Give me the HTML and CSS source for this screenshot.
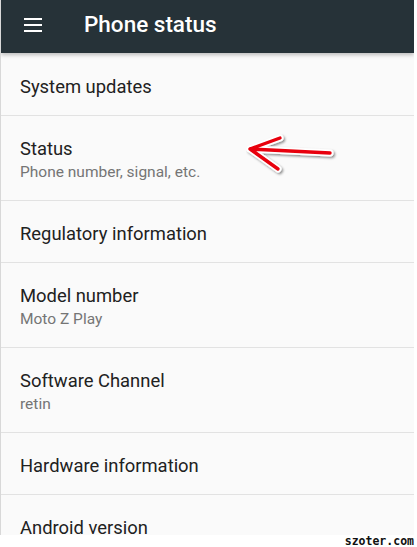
FILE: index.html
```html
<!DOCTYPE html>
<html lang="en">

<head>
    <meta charset="UTF-8">
    <meta name="viewport" content="width=device-width, initial-scale=1.0">
    <title>Phone status</title>
    <link rel="stylesheet" href="styles.css">
</head>

<body>
    <div class="screen">
        <div class="toolbar">
            <svg class="menu" width="24" height="24" viewBox="0 0 24 24">
                <path d="M3 6h18M3 12h18M3 18h18" stroke="#fff" stroke-width="2.2" fill="none"/>
            </svg>
            <span class="title">Phone status</span>
        </div>
        <ul class="list">
            <li class="item"><div class="primary">System updates</div></li>
            <li class="item">
                <div class="primary">Status</div>
                <div class="secondary">Phone number, signal, etc.</div>
                <svg class="arrow" width="100" height="50" viewBox="0 0 100 50">
                    <defs>
                        <filter id="sh" x="-20%" y="-40%" width="140%" height="180%">
                            <feDropShadow dx="1.5" dy="1.5" stdDeviation="1.2" flood-color="#000" flood-opacity="0.45"/>
                        </filter>
                    </defs>
                    <g filter="url(#sh)" fill="none" stroke-linecap="round">
                        <path d="M4 21 L34 10 M4 21 L84 25 M4 21 L32 41" stroke="#fff" stroke-width="7"/>
                        <path d="M4 21 L34 10 M4 21 L84 25 M4 21 L32 41" stroke="#e8000a" stroke-width="3.4"/>
                    </g>
                </svg>
            </li>
            <li class="item"><div class="primary">Regulatory information</div></li>
            <li class="item">
                <div class="primary">Model number</div>
                <div class="secondary">Moto Z Play</div>
            </li>
            <li class="item">
                <div class="primary">Software Channel</div>
                <div class="secondary">retin</div>
            </li>
            <li class="item"><div class="primary">Hardware information</div></li>
            <li class="item"><div class="primary">Android version</div></li>
        </ul>
    </div>
    <div class="mark">szoter.com</div>
</body>

</html>
```

FILE: styles.css
```css
* {
    margin: 0;
    padding: 0;
    box-sizing: border-box;
}

body {
    background: #fff;
    font-family: Roboto, "Noto Sans", sans-serif;
    width: 417px;
}

.screen {
    width: 414px;
    height: 535px;
    overflow: hidden;
    background: #fafafa;
    border-left: 1px solid #d8d8d8;
}

.toolbar {
    height: 53px;
    background: #263238;
    display: flex;
    align-items: center;
    padding-left: 20px;
    box-shadow: 0 2px 4px rgba(0, 0, 0, 0.25);
    position: relative;
}

.menu {
    margin-top: -4px;
}

.title {
    color: #fff;
    font-size: 22.5px;
    font-weight: 500;
    margin-left: 39px;
    margin-top: -6px;
}

.list {
    list-style: none;
}

.item {
    position: relative;
    padding: 22px 20px 17px 19px;
    border-bottom: 1px solid #e2e2e2;
}

.item:first-child {
    padding-top: 23px;
}

.primary {
    font-size: 18.4px;
    line-height: 22px;
    color: #212121;
}

.secondary {
    font-size: 15.5px;
    line-height: 23px;
    margin-top: 1px;
    margin-bottom: -1px;
    color: #757575;
}

.arrow {
    position: absolute;
    left: 245px;
    top: 12px;
}

.mark {
    text-align: right;
    padding-right: 3px;
    font-family: "DejaVu Sans Mono", monospace;
    font-weight: bold;
    font-size: 11.5px;
    line-height: 12px;
    color: #111;
}
```
